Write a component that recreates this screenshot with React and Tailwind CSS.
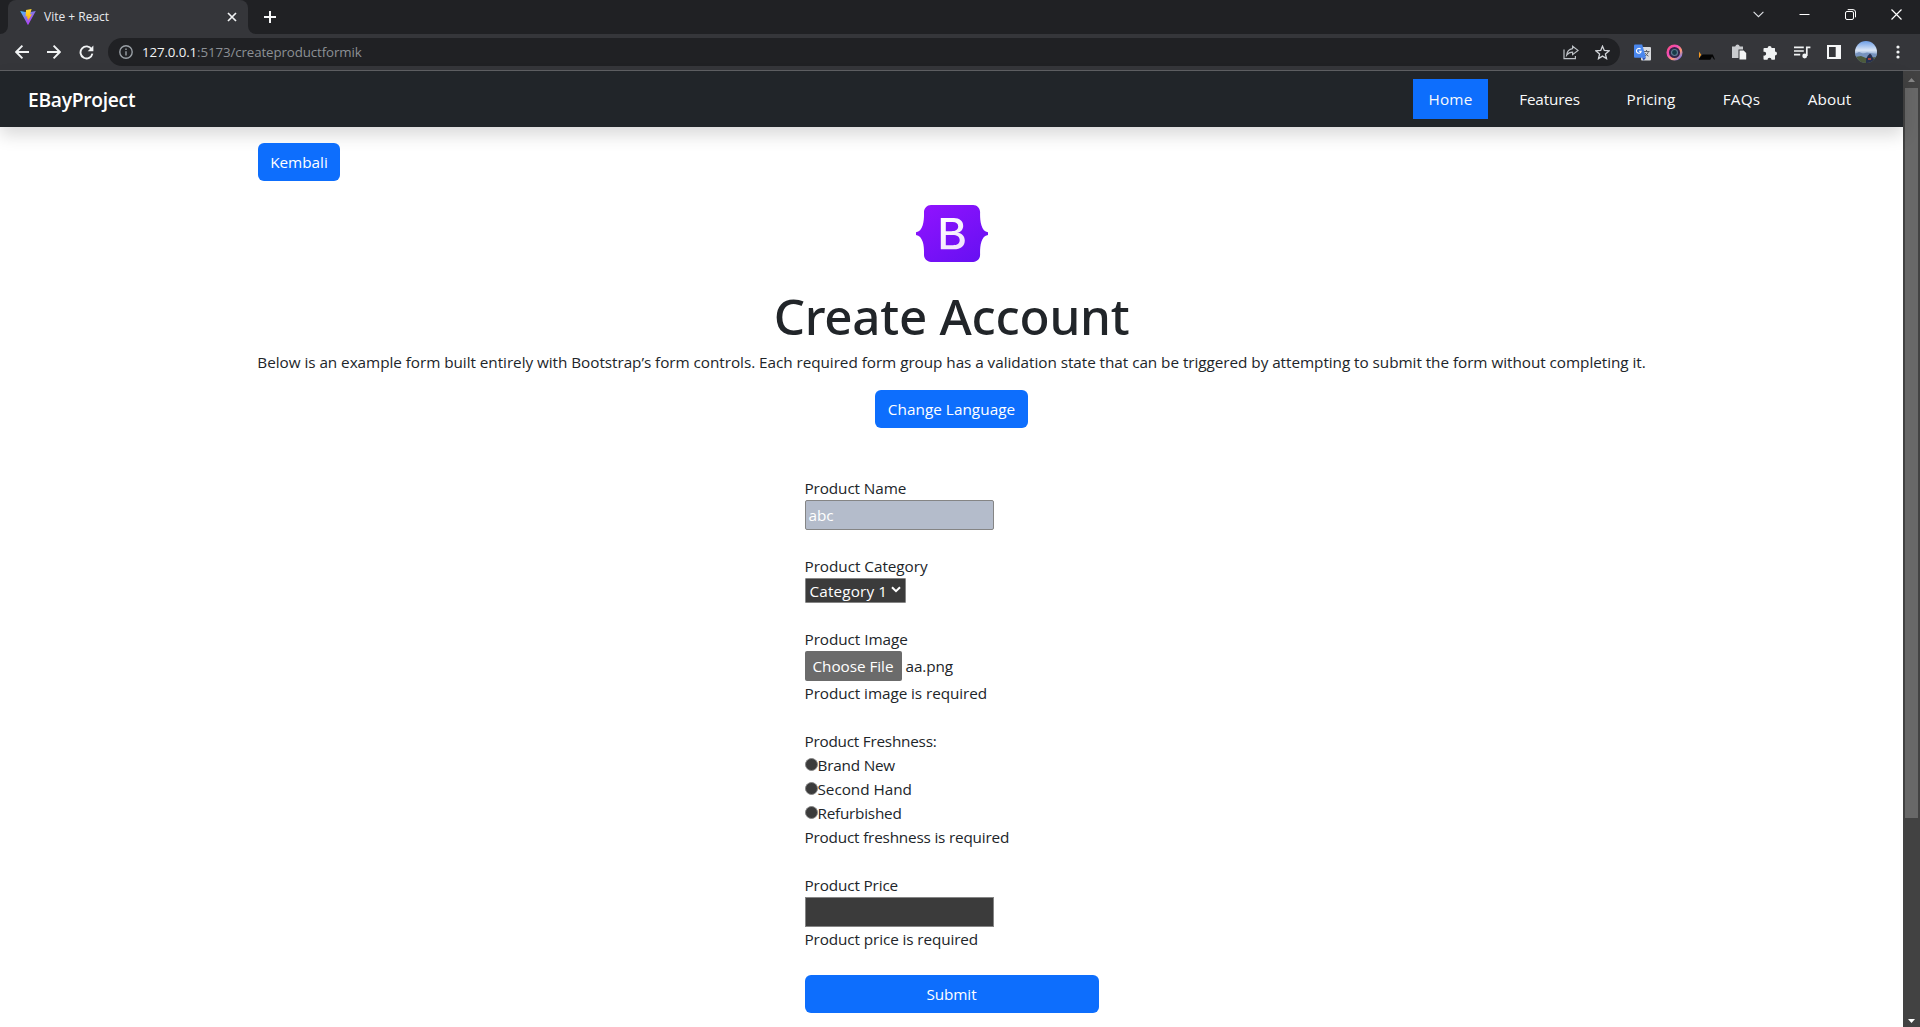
const paragraph =
  "Below is an example form built entirely with Bootstrap’s form controls. Each required form group has a validation state that can be triggered by attempting to submit the form without completing it.";

function ViteLogo() {
  return (
    <svg width="16" height="17" viewBox="0 0 16 17">
      <defs>
        <linearGradient id="vite" x1="0" y1="0" x2="0.7" y2="1">
          <stop offset="0" stopColor="#41c4ff" />
          <stop offset="0.5" stopColor="#8a6fe8" />
          <stop offset="1" stopColor="#bd34fe" />
        </linearGradient>
        <linearGradient id="bolt" x1="0" y1="0" x2="0" y2="1">
          <stop offset="0" stopColor="#ffdd35" />
          <stop offset="1" stopColor="#ffa800" />
        </linearGradient>
      </defs>
      <path d="M0.2 2 8 3.4 15.8 2 8.4 15.6Q8 16.2 7.6 15.6Z" fill="url(#vite)" />
      <path d="M11.6 0 6 1.1 5.6 7.6 7.4 7.2 6.9 9.7 8.3 9.3 7.8 12.3 11.9 5.3 10 5.6Z" fill="url(#bolt)" />
    </svg>
  );
}

function TabStrip() {
  return (
    <div className="flex h-[34px] items-end bg-[#202124]">
      <div className="h-2 w-2 bg-[#35363a]">
        <div className="h-2 w-2 rounded-br-lg bg-[#202124]" />
      </div>
      <div className="flex h-[34px] w-60 items-center rounded-t-lg bg-[#35363a] pr-[11px] pl-3">
        <ViteLogo />
        <span className="ml-2 grow text-[12px] text-[#e8eaed]">Vite + React</span>
        <svg width="10" height="10" viewBox="0 0 10 10" stroke="#f1f3f4" strokeWidth="1.7">
          <path d="M1 1 9 9M9 1 1 9" />
        </svg>
      </div>
      <div className="h-2 w-2 bg-[#35363a]">
        <div className="h-2 w-2 rounded-bl-lg bg-[#202124]" />
      </div>
      <div className="flex h-[34px] grow items-center">
        <svg width="12" height="12" viewBox="0 0 12 12" stroke="#f8f9fa" strokeWidth="2" className="ml-2">
          <path d="M6 0V12M0 6H12" />
        </svg>
      </div>
      <div className="flex h-[34px] items-start gap-[35px] pt-[9px] pr-[18px]">
        <svg width="11" height="11" viewBox="0 0 11 11" fill="none" stroke="#dfe1e5" strokeWidth="1.1">
          <path d="M.6 2.8 5.5 7.7 10.4 2.8" />
        </svg>
        <svg width="11" height="11" viewBox="0 0 11 11" stroke="#fff" strokeWidth="1">
          <path d="M.5 5.5H10.5" />
        </svg>
        <svg width="11" height="11" viewBox="0 0 11 11" fill="none" stroke="#fff" strokeWidth="1">
          <rect x=".5" y="2.5" width="8" height="8" rx="1.5" />
          <path d="M2.7.6H8A2.5 2.5 0 0 1 10.5 3V8.3" />
        </svg>
        <svg width="11" height="11" viewBox="0 0 11 11" stroke="#fff" strokeWidth="1.2">
          <path d="M.5.5 10.5 10.5M10.5.5.5 10.5" />
        </svg>
      </div>
    </div>
  );
}

function Toolbar() {
  return (
    <div className="flex h-[36px] items-center bg-[#35363a]">
      <div className="flex w-[108px] items-center gap-[18px] pl-[15px]">
        <svg width="14" height="14" viewBox="0 0 14 14" fill="none" stroke="#f1f3f4" strokeWidth="1.9">
          <path d="M14 7H1.4M7.4.7 1.2 7 7.4 13.3" />
        </svg>
        <svg width="14" height="14" viewBox="0 0 14 14" fill="none" stroke="#f1f3f4" strokeWidth="1.9">
          <path d="M0 7H12.6M6.6.7 12.8 7 6.6 13.3" />
        </svg>
        <svg width="15" height="15" viewBox="0 0 15 15" fill="none" stroke="#f1f3f4" strokeWidth="1.9">
          <path d="M12.6 4.2A6 6 0 1 0 13.4 8.6" />
          <path d="M14.4.6V6.3H8.7Z" fill="#f1f3f4" stroke="none" />
        </svg>
      </div>
      <div className="flex h-7 w-[1512px] items-center rounded-full bg-[#202124] pr-[10px] pl-[11px]">
        <svg width="14" height="14" viewBox="0 0 14 14" fill="none" stroke="#9aa0a6" strokeWidth="1.4">
          <circle cx="7" cy="7" r="6.2" />
          <path d="M7 6.2V10.4M7 3.6V5.1" />
        </svg>
        <span className="ml-[9px] grow pt-0.5 text-[13.3px] tracking-[-0.11px] text-[#8c9095]">
          <span className="text-[#f1f3f4]">127.0.0.1</span>:5173/createproductformik
        </span>
        <svg width="16" height="15" viewBox="0 0 16 15" fill="none" stroke="#bdc1c6" strokeWidth="1.2" className="mr-[16px]">
          <path d="M1 4.5V13.6H12.4V11" />
          <path d="M9.6 1.2 15 5.4 9.6 9.6V7.1C7 7.1 5.2 8 3.6 10.2 4 6.6 6.2 4.2 9.6 3.7Z" />
        </svg>
        <svg width="15" height="15" viewBox="0 0 15 15" fill="none" stroke="#d2d5d9" strokeWidth="1.3">
          <path d="M7.5 1.2 9.3 5.5 14 5.9 10.4 9 11.5 13.6 7.5 11.1 3.5 13.6 4.6 9 1 5.9 5.7 5.5Z" />
        </svg>
      </div>
      <div className="flex items-center pl-[14px]">
        <svg width="17" height="17" viewBox="0 0 17 17">
          <rect x="7" y="3" width="10" height="13.5" rx="1" fill="#d8dade" />
          <path d="M9.5 7.5H15.5M12.5 6V7.5M14.6 7.5Q13.6 10.5 10.6 12.2M11 9Q12 11 14.5 12.2" stroke="#62666c" fill="none" />
          <path d="M1 .5H8.2L12 13.8H1Q0 13.8 0 12.8V1.5Q0 .5 1 .5Z" fill="#4a87ee" />
          <path d="M8.2 13.8H12L9.6 16.5Z" fill="#2c56bd" />
          <path d="M6.6 5.2A2.4 2.4 0 1 0 7.2 7.2H5" fill="none" stroke="#fff" strokeWidth="1.1" />
        </svg>
        <svg width="17" height="17" viewBox="0 0 17 17" fill="none" className="ml-[15px]">
          <defs>
            <linearGradient id="ring" x1="0" y1="0" x2="1" y2="1">
              <stop offset="0" stopColor="#ff4f7d" />
              <stop offset=".35" stopColor="#f04ab8" />
              <stop offset=".65" stopColor="#ff9a76" />
              <stop offset="1" stopColor="#5f6dff" />
            </linearGradient>
          </defs>
          <circle cx="8.5" cy="8.5" r="6.8" fill="#33254a" stroke="url(#ring)" strokeWidth="2.5" />
          <circle cx="8.5" cy="8.5" r="3" fill="#173b47" stroke="#5c7b90" strokeWidth="1.2" />
        </svg>
        <svg width="16" height="16" viewBox="0 0 16 16" className="ml-4">
          <path d="M0 7.5 2.2 10.8 0 14.5Z" fill="#f59a23" />
          <path d="M0 14.5 3.6 10.5H13.8L16 15.5H15L13 12.5 11.4 15.8H0Z" fill="#050505" />
        </svg>
        <svg width="15" height="16" viewBox="0 0 15 16" className="ml-[17px]">
          <path d="M0 2.5H3.2Q3.8.6 5.5.6T7.8 2.5H11V5.5H6.5V14H0Z" fill="#c9cbce" />
          <path d="M7.5 6.5H11.6L14.2 9.1V15.5H7.5Z" fill="#f4f5f6" />
        </svg>
        <svg width="15" height="15" viewBox="0 0 15 15" fill="#f1f3f4" className="ml-4">
          <path d="M1.5 3H4.6A2 2 0 1 1 8.6 3H11.5Q12 3 12 3.5V6.4A2 2 0 1 1 12 10.4V14Q12 14.7 11.3 14.7H8.5A2 2 0 1 0 4.5 14.7H1.2Q.5 14.7.5 14V10.6A2 2 0 1 0 .5 6.8V3.8Q.5 3 1.5 3Z" />
        </svg>
        <svg width="17" height="15" viewBox="0 0 17 15" className="ml-4" fill="none" stroke="#f1f3f4" strokeWidth="1.7">
          <path d="M0 2.4H9.8M0 6H9.8M0 9.6H6.2" />
          <path d="M12.8 11V2.3H16.4" />
          <circle cx="10.7" cy="11" r="2.4" fill="#f1f3f4" stroke="none" />
        </svg>
        <svg width="14" height="14" viewBox="0 0 14 14" className="ml-4">
          <path fillRule="evenodd" d="M0 0H14V14H0ZM2 2V12H8.7V2Z" fill="#f6f7f8" />
        </svg>
        <svg width="22" height="22" viewBox="0 0 22 22" className="ml-[14px]">
          <defs>
            <clipPath id="face"><circle cx="11" cy="11" r="11" /></clipPath>
            <linearGradient id="sky" x1="0" y1="0" x2="0" y2="1">
              <stop offset="0" stopColor="#6d9ee6" />
              <stop offset=".42" stopColor="#dbe6f6" />
              <stop offset=".6" stopColor="#90acd3" />
              <stop offset="1" stopColor="#5c7090" />
            </linearGradient>
          </defs>
          <g clipPath="url(#face)">
            <rect width="22" height="22" fill="url(#sky)" />
            <path d="M0 13 4 11 8 12.4 12 11.5 22 13V16H0Z" fill="#7793bd" />
            <path d="M0 16 6 15 11 17 22 16V22H0Z" fill="#4c5a3c" />
            <path d="M11 18 13 14.5 15 12.5 16.5 14 19 19 17 22H11Z" fill="#27304f" />
            <path d="M13 17H16V19H13Z" fill="#a8433d" />
          </g>
        </svg>
        <svg width="4" height="14" viewBox="0 0 4 14" fill="#f1f3f4" className="ml-[19px]">
          <circle cx="2" cy="2" r="1.6" />
          <circle cx="2" cy="7" r="1.6" />
          <circle cx="2" cy="12" r="1.6" />
        </svg>
      </div>
    </div>
  );
}

function NavBar() {
  const item = "flex h-10 items-center justify-center pt-px text-[15.3px] text-[#f8f9fa]";
  return (
    <header className="relative flex h-14 items-center bg-[#212529] pr-[35px] pl-7 shadow-[0_8px_16px_rgba(0,0,0,0.15)]">
      <span className="grow pt-0.5 text-[19.2px] font-semibold tracking-[-0.26px] text-white">EBayProject</span>
      <nav className="flex gap-4">
        <a className={`${item} w-[75px] bg-[#0d6efd] tracking-[0.2px]`}>Home</a>
        <a className={`${item} w-[91px] tracking-[-0.18px]`}>Features</a>
        <a className={`${item} w-20 tracking-[0.08px]`}>Pricing</a>
        <a className={`${item} w-[69px] tracking-[0.2px]`}>FAQs</a>
        <a className={`${item} w-[75px] tracking-[0.05px]`}>About</a>
        <span className="-ml-[15px]" />
      </nav>
    </header>
  );
}

function BootstrapLogo() {
  return (
    <svg width="72" height="57" viewBox="0 0 72 57">
      <defs>
        <linearGradient id="bs" x1="0.1" y1="0" x2="0.9" y2="1">
          <stop offset="0" stopColor="#9013fe" />
          <stop offset="1" stopColor="#6610f2" />
        </linearGradient>
        <linearGradient id="letter" x1="0" y1="0" x2="0.6" y2="1">
          <stop offset="0" stopColor="#ffffff" />
          <stop offset="1" stopColor="#f1e5fc" />
        </linearGradient>
      </defs>
      <path
        d="M15 0H57.2C61.3 0 64.3 3.6 64.1 7.5C64 11.2 64.1 16.1 65.4 20.2C66.6 24.3 68.7 26.8 72 27.2V29.9C68.7 30.2 66.6 32.8 65.4 36.8C64.1 40.9 64 45.8 64.1 49.5C64.3 53.4 61.3 57 57.2 57H15C10.9 57 7.8 53.4 8 49.5C8.1 45.8 8 40.9 6.7 36.8C5.4 32.8 3.3 30.2 0 29.9V27.2C3.3 26.8 5.4 24.3 6.7 20.2C8 16.1 8.1 11.2 8 7.5C7.8 3.6 10.9 0 15 0Z"
        fill="url(#bs)"
      />
      <path
        fillRule="evenodd"
        d="M24.8 13.1H37.9C43.6 13.1 47.2 16.2 47.2 20.9C47.2 24.2 44.7 27.1 41.6 27.6V27.8C45.9 28.3 48.8 31.3 48.8 35.5C48.8 41 44.7 44.3 37.9 44.3H24.8ZM29.8 17.1V26.2H35.4C39.8 26.2 42.2 24.6 42.2 21.5C42.2 18.7 40.2 17.1 36.7 17.1ZM29.8 29.9V40.3H36.9C41.3 40.3 43.7 38.6 43.7 35.1C43.7 31.6 41.2 29.9 36.3 29.9Z"
        fill="url(#letter)"
      />
    </svg>
  );
}

function Radio({ children }) {
  return (
    <label className="flex h-6 items-center">
      <span className="mb-px h-[13px] w-[13px] rounded-full border border-[#858585] bg-[#3b3b3b]" />
      {children}
    </label>
  );
}

function ProductForm() {
  return (
    <form className="mt-12 flex w-[294px] flex-col gap-6 self-center">
      <div>
        <div className="tracking-[-0.1px]">Product Name</div>
        <div className="flex h-[30px] w-[189px] items-center rounded-xs border border-[#858585] bg-[#b4bccb] pl-[3px] tracking-[-0.1px] text-white">
          abc
        </div>
      </div>
      <div>
        <div className="tracking-[-0.04px]">Product Category</div>
        <div className="flex h-[25px] w-[101px] items-center rounded-[1px] border border-[#858585] bg-[#3b3b3b] pl-1 tracking-[0.14px] text-white">
          Category 1
          <svg width="10" height="7" viewBox="0 0 10 7" fill="none" stroke="#fff" strokeWidth="2" className="mb-[2px] ml-[4px]">
            <path d="M1 1.2 5 5.2 9 1.2" />
          </svg>
        </div>
      </div>
      <div>
        <div className="tracking-[-0.06px]">Product Image</div>
        <div className="flex h-[30px] items-center">
          <span className="flex h-[30px] w-[97px] items-center justify-center rounded-xs bg-[#6b6b6b] tracking-[-0.05px] text-white">
            Choose File
          </span>
          <span className="ml-1 tracking-[-0.1px]">aa.png</span>
        </div>
        <div className="tracking-[-0.07px]">Product image is required</div>
      </div>
      <div>
        <div className="tracking-[-0.23px]">Product Freshness:</div>
        <div className="tracking-[-0.2px]"><Radio>Brand New</Radio></div>
        <div className="tracking-[-0.04px]"><Radio>Second Hand</Radio></div>
        <div className="tracking-[-0.24px]"><Radio>Refurbished</Radio></div>
        <div className="tracking-[-0.19px]">Product freshness is required</div>
      </div>
      <div>
        <div className="tracking-[-0.14px]">Product Price</div>
        <div className="h-[30px] w-[189px] border border-[#858585] bg-[#3b3b3b]" />
        <div className="tracking-[-0.11px]">Product price is required</div>
      </div>
      <button className="h-[38px] rounded-md bg-[#0d6efd] tracking-[-0.1px] text-white">Submit</button>
    </form>
  );
}

function Scrollbar() {
  return (
    <div className="flex w-[17px] flex-col items-center bg-[#424242]">
      <div className="flex h-[17px] items-center">
        <svg width="7" height="4" viewBox="0 0 7 4" fill="#868686"><path d="M3.5 0 7 4H0Z" /></svg>
      </div>
      <div className="h-[730px] w-[13px] bg-[#686868]" />
      <div className="grow" />
      <div className="flex h-2 items-start">
        <svg width="7" height="4" viewBox="0 0 7 4" fill="#fff"><path d="M3.5 4 7 0H0Z" /></svg>
      </div>
    </div>
  );
}

export default function App() {
  return (
    <div className="flex h-[1027px] w-[1920px] flex-col overflow-hidden bg-white font-['Open_Sans',sans-serif] text-[#212529]">
      <TabStrip />
      <Toolbar />
      <div className="h-px bg-[#5f6063]" />
      <div className="flex grow">
        <div className="flex w-[1903px] flex-col">
          <NavBar />
          <main className="flex w-[1388px] flex-col self-center pt-4 text-[15.3px] leading-6">
            <button className="relative h-[38px] w-[82px] rounded-md bg-[#0d6efd] pl-px text-white">Kembali</button>
            <div className="flex flex-col items-center pt-6">
              <BootstrapLogo />
              <h1 className="mt-[26px] font-['Noto_Sans',sans-serif] text-[49.3px] leading-[56px] font-medium tracking-[-0.25px]">
                Create Account
              </h1>
              <p className="mt-1.5 tracking-[-0.05px] whitespace-nowrap">{paragraph}</p>
              <button className="mt-4 h-[38px] w-[153px] rounded-md bg-[#0d6efd] tracking-[0.04px] text-white">Change Language</button>
            </div>
            <ProductForm />
          </main>
        </div>
        <Scrollbar />
      </div>
    </div>
  );
}
